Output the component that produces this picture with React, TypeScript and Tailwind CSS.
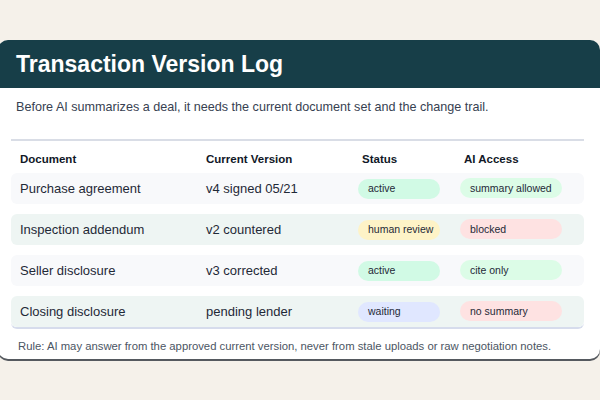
export default function App() {
  const rows = [
    { d: "Purchase agreement", v: "v4 signed 05/21", s: "active", sc: "bg-[#d1fae5]", a: "summary allowed", ac: "bg-[#dcfce7]", bg: "bg-[#f8f9fb]" },
    { d: "Inspection addendum", v: "v2 countered", s: "human review", sc: "bg-[#fef3c7]", a: "blocked", ac: "bg-[#fee2e2]", bg: "bg-[#eef5f3]" },
    { d: "Seller disclosure", v: "v3 corrected", s: "active", sc: "bg-[#d1fae5]", a: "cite only", ac: "bg-[#dcfce7]", bg: "bg-[#f8f9fb]" },
    { d: "Closing disclosure", v: "pending lender", s: "waiting", sc: "bg-[#e0e7ff]", a: "no summary", ac: "bg-[#fee2e2]", bg: "bg-[#eef5f3]" },
  ];
  return (
    <div className="w-[600px] h-[400px] bg-[#f5f1ea] pt-[40px] overflow-hidden" style={{ fontFamily: '"Liberation Sans", Arial, sans-serif' }}>
      <div className="w-[602px] -ml-[2px] h-[319px] bg-white rounded-[10px] overflow-hidden shadow-[0_2px_0_#55595f]">
        <div className="h-[48px] bg-[#173e48] flex items-center pl-[18px]">
          <h1 className="text-white font-bold text-[23px]">Transaction Version Log</h1>
        </div>
        <p className="pl-[18px] pt-[10px] text-[12.6px] text-[#374151]">Before AI summarizes a deal, it needs the current document set and the change trail.</p>
        <div className="ml-[13px] mr-[16px] mt-[22px] border-t-2 border-[#d9dde6]">
          <div className="flex h-[32px] items-end pb-[5px] text-[11.5px] font-bold text-[#111827]">
            <div className="w-[195px] pl-[9px]">Document</div>
            <div className="w-[156px]">Current Version</div>
            <div className="w-[102px]">Status</div>
            <div>AI Access</div>
          </div>
          <div className="flex flex-col gap-[10px] border-b-2 border-[#d6dcec] rounded-b-[6px]">
            {rows.map((r) => (
              <div key={r.d} className={`flex items-center h-[31px] rounded-[6px] ${r.bg} text-[13px] text-[#1f2937]`}>
                <div className="w-[195px] pl-[9px]">{r.d}</div>
                <div className="w-[152px]">{r.v}</div>
                <div className="w-[102px]">
                  <span className={`inline-flex w-[82px] h-[20px] items-center pl-[10px] rounded-full text-[10.5px] ${r.sc}`}>{r.s}</span>
                </div>
                <span className={`inline-flex w-[102px] h-[20px] items-center pl-[10px] rounded-full text-[10.5px] ${r.ac}`}>{r.a}</span>
              </div>
            ))}
          </div>
          <p className="pt-[9px] text-[11.3px] text-[#4b5563] pl-[7px] whitespace-nowrap">Rule: AI may answer from the approved current version, never from stale uploads or raw negotiation notes.</p>
        </div>
      </div>
    </div>
  );
}
